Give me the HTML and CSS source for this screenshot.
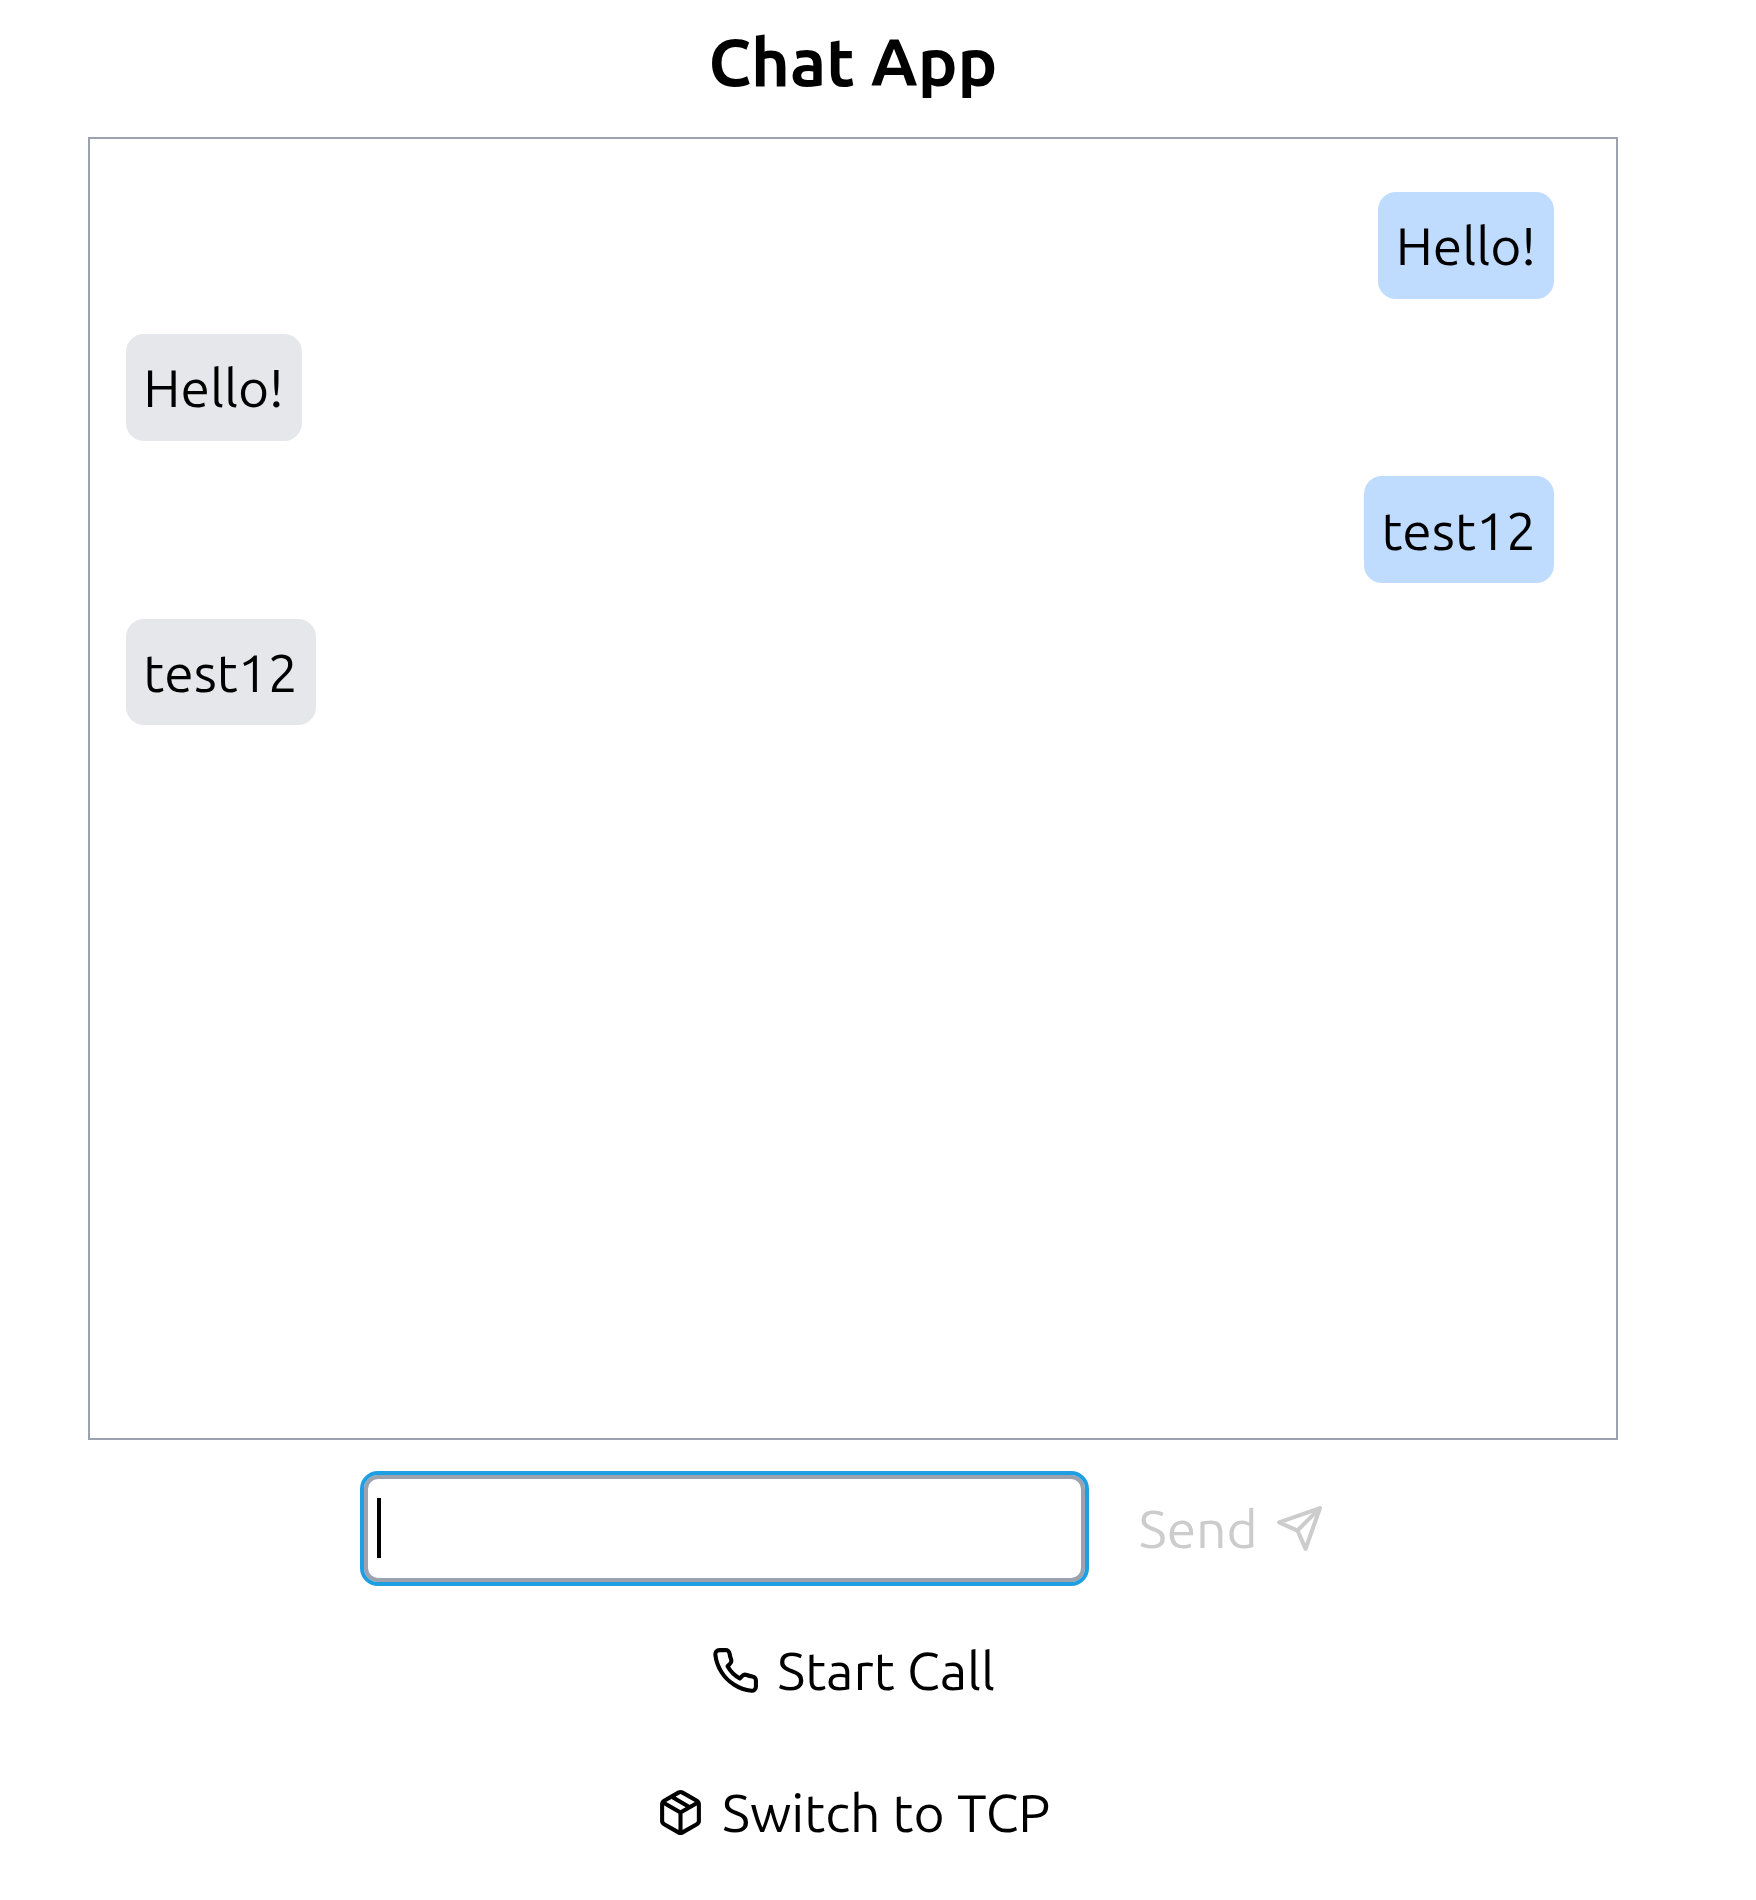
FILE: index.html
```html
<!DOCTYPE html>
<html lang="en">
<head>
<meta charset="utf-8">
<title>Chat App</title>
<link rel="stylesheet" href="styles.css">
</head>
<body>
<main class="app">
  <h1 class="title">Chat App</h1>
  <section class="messages">
    <p class="bubble mine">Hello!</p>
    <p class="bubble">Hello!</p>
    <p class="bubble mine">test12</p>
    <p class="bubble">test12</p>
  </section>
  <form class="composer">
    <div class="field"><span class="caret"></span></div>
    <button class="action send" type="button" disabled><span>Send</span>
      <svg class="icon" viewBox="0 0 24 24"><path d="M22 2 11 13M22 2l-7 20-4-9-9-4z"/></svg>
    </button>
  </form>
  <button class="action" type="button">
    <svg class="icon" viewBox="0 0 24 24"><path d="M22 16.92v3a2 2 0 0 1-2.18 2 19.79 19.79 0 0 1-8.63-3.07 19.5 19.5 0 0 1-6-6 19.79 19.79 0 0 1-3.07-8.67A2 2 0 0 1 4.11 2h3a2 2 0 0 1 2 1.72c.13.96.36 1.9.7 2.81a2 2 0 0 1-.45 2.11L8.09 9.91a16 16 0 0 0 6 6l1.27-1.27a2 2 0 0 1 2.11-.45c.91.34 1.85.57 2.81.7A2 2 0 0 1 22 16.92z"/></svg>
    <span>Start Call</span>
  </button>
  <button class="action" type="button">
    <svg class="icon" viewBox="0 0 24 24"><path d="M16.5 9.4l-9-5.19M21 16V8a2 2 0 0 0-1-1.73l-7-4a2 2 0 0 0-2 0l-7 4A2 2 0 0 0 3 8v8a2 2 0 0 0 1 1.73l7 4a2 2 0 0 0 2 0l7-4A2 2 0 0 0 21 16zM3.27 6.96 12 12.01l8.73-5.05M12 22.08V12"/></svg>
    <span>Switch to TCP</span>
  </button>
</main>
</body>
</html>
```
FILE: styles.css
```css
* { box-sizing: border-box; }
body {
  margin: 0;
  background: #fff;
  color: #000;
  font: 400 53.333px/71px Ubuntu, "Noto Sans", "Open Sans", sans-serif;
}
.app {
  display: flex;
  flex-direction: column;
  align-items: center;
  width: 1706px;
  height: 1900px;
}
.title {
  margin: 0;
  padding-top: 22px;
  height: 137px;
  font-size: 66.667px;
  font-weight: 600;
  line-height: 80px;
}
.messages {
  display: flex;
  flex-direction: column;
  align-items: flex-start;
  gap: 35.5px;
  width: 1530px;
  height: 1303px;
  padding: 53px 62.2px 0 35.6px;
  border: 2px solid #9ca3af;
}
.bubble {
  margin: 0;
  padding: 18.2px 17.778px 0;
  height: 106.7px;
  border-radius: 18px;
  background: #e5e7eb;
  line-height: 71.2px;
  white-space: nowrap;
}
.mine { align-self: flex-end; background: #bfdbfe; }
.composer {
  display: flex;
  align-items: center;
  align-self: flex-start;
  margin: 35px 0 0 364px;
}
.field {
  width: 721px;
  height: 107px;
  padding: 19px 9px;
  border: 4px solid #9ca3af;
  border-radius: 14px;
  outline: 4px solid #1e9fe2;
}
.caret { display: block; width: 4px; height: 60px; background: #000; }
.action {
  display: flex;
  align-items: center;
  gap: 17.3px;
  height: 107px;
  margin-top: 35.2px;
  padding: 0;
  border: 0;
  background: none;
  color: inherit;
  font: inherit;
  white-space: nowrap;
}
.send { margin: 0 0 0 53.7px; color: #ccc; }
.icon {
  flex: none;
  width: 49px;
  height: 49px;
  fill: none;
  stroke: currentColor;
  stroke-width: 2;
  stroke-linecap: round;
  stroke-linejoin: round;
}
```
